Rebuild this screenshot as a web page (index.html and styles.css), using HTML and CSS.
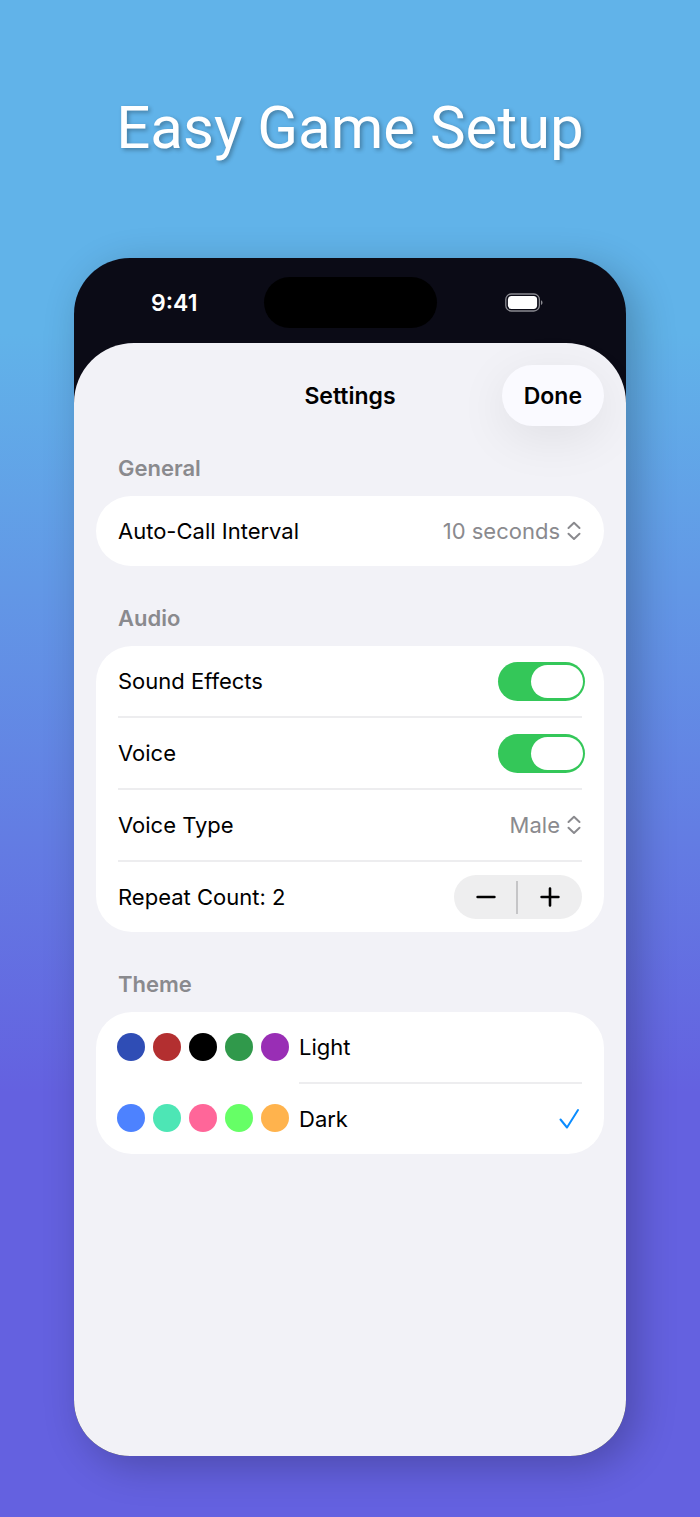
FILE: index.html
```html
<!DOCTYPE html>
<html lang="en">
<head>
<meta charset="utf-8">
<meta name="viewport" content="width=device-width, initial-scale=1">
<title>Easy Game Setup</title>
<link rel="stylesheet" href="styles.css">
</head>
<body>
<main class="promo">
  <h1 class="headline">Easy Game Setup</h1>
  <div class="phone">
    <div class="statusbar">
      <span class="time">9:41</span>
      <span class="island"></span>
      <svg class="battery" width="38" height="20" viewBox="0 0 38 20" aria-label="Battery full">
        <rect x="0.8" y="1" width="33.6" height="17" rx="5.5" fill="none" stroke="#8b8b91" stroke-width="1.3"/>
        <rect x="2.9" y="3.1" width="29.2" height="12.800" rx="3.6" fill="#fff"/>
        <path d="M36 7.2c2 .9 2 3.900 0 4.800z" fill="#8b8b91"/>
      </svg>
    </div>
    <form class="sheet">
      <header class="navbar">
        <h2 class="nav-title">Settings</h2>
        <button class="done" type="button">Done</button>
      </header>

      <section class="group">
        <h3 class="group-title">General</h3>
        <div class="card">
          <div class="row">
            <label for="interval">Auto-Call Interval</label>
            <span class="picker">
              <select id="interval"><option>10 seconds</option></select>
              <svg width="14" height="20" viewBox="0 0 14 20" aria-hidden="true"><path d="M1.500 7 7 1.800 12.500 7M1.500 12.800 7 18l5.500-5.200"/></svg>
            </span>
          </div>
        </div>
      </section>

      <section class="group">
        <h3 class="group-title">Audio</h3>
        <div class="card">
          <div class="row">
            <label for="effects">Sound Effects</label>
            <input class="switch" id="effects" type="checkbox" role="switch" checked>
          </div>
          <div class="row">
            <label for="voice">Voice</label>
            <input class="switch" id="voice" type="checkbox" role="switch" checked>
          </div>
          <div class="row">
            <label for="voice-type">Voice Type</label>
            <span class="picker">
              <select id="voice-type"><option>Male</option></select>
              <svg width="14" height="20" viewBox="0 0 14 20" aria-hidden="true"><path d="M1.500 7 7 1.800 12.500 7M1.500 12.800 7 18l5.500-5.200"/></svg>
            </span>
          </div>
          <div class="row">
            <span>Repeat Count: 2</span>
            <div class="stepper">
              <button type="button" aria-label="Decrease"><svg width="20" height="20" viewBox="0 0 20 20"><path d="M1.600 10h16.800"/></svg></button>
              <button type="button" aria-label="Increase"><svg width="20" height="20" viewBox="0 0 20 20"><path d="M1.600 10h16.800M10 1.600v16.800"/></svg></button>
            </div>
          </div>
        </div>
      </section>

      <section class="group">
        <h3 class="group-title">Theme</h3>
        <div class="card themes">
          <label class="row theme">
            <input type="radio" name="theme">
            <span class="dots">
              <i class="dot navy"></i><i class="dot brick"></i><i class="dot black"></i><i class="dot forest"></i><i class="dot purple"></i>
            </span>
            <span class="name">Light</span>
          </label>
          <label class="row theme">
            <input type="radio" name="theme" checked>
            <span class="dots">
              <i class="dot blue"></i><i class="dot mint"></i><i class="dot pink"></i><i class="dot lime"></i><i class="dot orange"></i>
            </span>
            <span class="name">Dark</span>
            <svg class="check" width="22" height="22" viewBox="0 0 22 22" aria-hidden="true"><path d="M2.500 12.500 9 20.500 20 3"/></svg>
          </label>
        </div>
      </section>
    </form>
  </div>
</main>
</body>
</html>
```
FILE: styles.css
```css
* { box-sizing: border-box; }

body {
  margin: 0;
  min-height: 100vh;
  background: linear-gradient(#61b3e9 0%, #61b3e9 22%, #6461e0 72%, #6461e0 100%);
  font-family: Inter, "Liberation Sans", sans-serif;
  font-size: 22px;
  line-height: 28px;
  color: #000;
}

.promo {
  display: flex;
  flex-direction: column;
  min-height: 100vh;
  padding: 92px 74px 61px;
}

.headline {
  margin: 0 0 94px;
  font: 400 60px/72px Roboto, sans-serif;
  text-align: center;
  white-space: nowrap;
  color: #fff;
  text-shadow: 2px 2px 4px rgba(0, 0, 0, 0.3);
}

.phone {
  flex: 1;
  display: flex;
  flex-direction: column;
  overflow: hidden;
  border-radius: 56px;
  background: #0b0b16;
  box-shadow: 10px 10px 40px rgba(0, 0, 0, 0.24);
}

.statusbar {
  display: grid;
  grid-template-columns: 1fr 173px 1fr;
  align-items: center;
  justify-items: center;
  height: 85px;
  padding-top: 4px;
}

.time {
  padding-left: 11px;
  font-size: 23px;
  font-weight: 600;
  color: #fff;
}

.island {
  width: 173px;
  height: 51px;
  border-radius: 26px;
  background: #000;
}

.battery { margin-right: 14px; }

.sheet {
  flex: 1;
  padding: 0 22px;
  border-radius: 60px 60px 0 0;
  background: #f2f2f7;
}

.navbar {
  display: grid;
  grid-template-columns: 1fr auto 1fr;
  align-items: center;
  padding-top: 22px;
}

.nav-title {
  grid-column: 2;
  margin: 0;
  font-size: 23px;
  font-weight: 600;
}

.done {
  justify-self: end;
  height: 61px;
  padding: 0 22px;
  border: 0;
  border-radius: 31px;
  background: #fafaff;
  box-shadow: 0 12px 50px rgba(0, 0, 0, 0.08);
  font: inherit;
  font-size: 23px;
  font-weight: 600;
  color: #000;
}

.group-title {
  margin: 0;
  padding: 38px 22px 14px;
  font-size: 22px;
  font-weight: 600;
  color: #8a8a8e;
}

.navbar + .group .group-title { padding-top: 28px; }

.card {
  padding: 0 22px;
  border-radius: 36px;
  background: #fff;
}

.row {
  display: flex;
  align-items: center;
  justify-content: space-between;
  height: 70px;
}

.row + .row {
  height: 72px;
  border-top: 2px solid #ededef;
}

.picker {
  display: flex;
  align-items: center;
  gap: 7px;
  padding-right: 1px;
}

.picker select {
  appearance: none;
  field-sizing: content;
  padding: 0;
  border: 0;
  background: none;
  font: inherit;
  color: #8a8a8e;
}

.picker svg, .stepper svg, .check {
  display: block;
  fill: none;
  stroke: #8a8a8e;
  stroke-width: 2;
  stroke-linecap: round;
  stroke-linejoin: round;
}

.switch {
  appearance: none;
  display: flex;
  justify-content: flex-end;
  width: 87px;
  height: 39px;
  margin: 0 -3px 0 0;
  padding: 3px 2px 3px 3px;
  border-radius: 20px;
  background: #34c759;
}

.switch::before {
  content: "";
  width: 52px;
  border-radius: 17px;
  background: #fff;
}

.stepper {
  display: flex;
  width: 128px;
  height: 44px;
  border-radius: 22px;
  background: #eeeeef;
}

.stepper button {
  flex: 1;
  display: grid;
  place-items: center;
  padding: 0;
  border: 0;
  background: none;
}

.stepper button:first-child {
  background: linear-gradient(#c5c5c7, #c5c5c7) right center / 2px 33px no-repeat;
}

.stepper svg {
  stroke: #000;
  stroke-width: 2.600;
}

.theme {
  position: relative;
  justify-content: flex-start;
}

.theme input {
  position: absolute;
  opacity: 0;
}

.row + .theme { border-top: 0; }

.dots {
  display: flex;
  gap: 8px;
  margin-left: -1px;
}

.dot {
  width: 28px;
  height: 28px;
  border-radius: 50%;
}

.navy { background: #2f4db5; }
.brick { background: #b32f30; }
.black { background: #000; }
.forest { background: #30994b; }
.purple { background: #992eb5; }
.blue { background: #4d82ff; }
.mint { background: #4de6b5; }
.pink { background: #ff6699; }
.lime { background: #66ff66; }
.orange { background: #ffb34d; }

.name {
  flex: 1;
  display: flex;
  align-items: center;
  align-self: stretch;
  margin-left: 10px;
}

.theme + .theme .name { border-top: 2px solid #ededef; }

.theme .check {
  position: absolute;
  right: 2px;
  stroke: #0a8cff;
}
```
